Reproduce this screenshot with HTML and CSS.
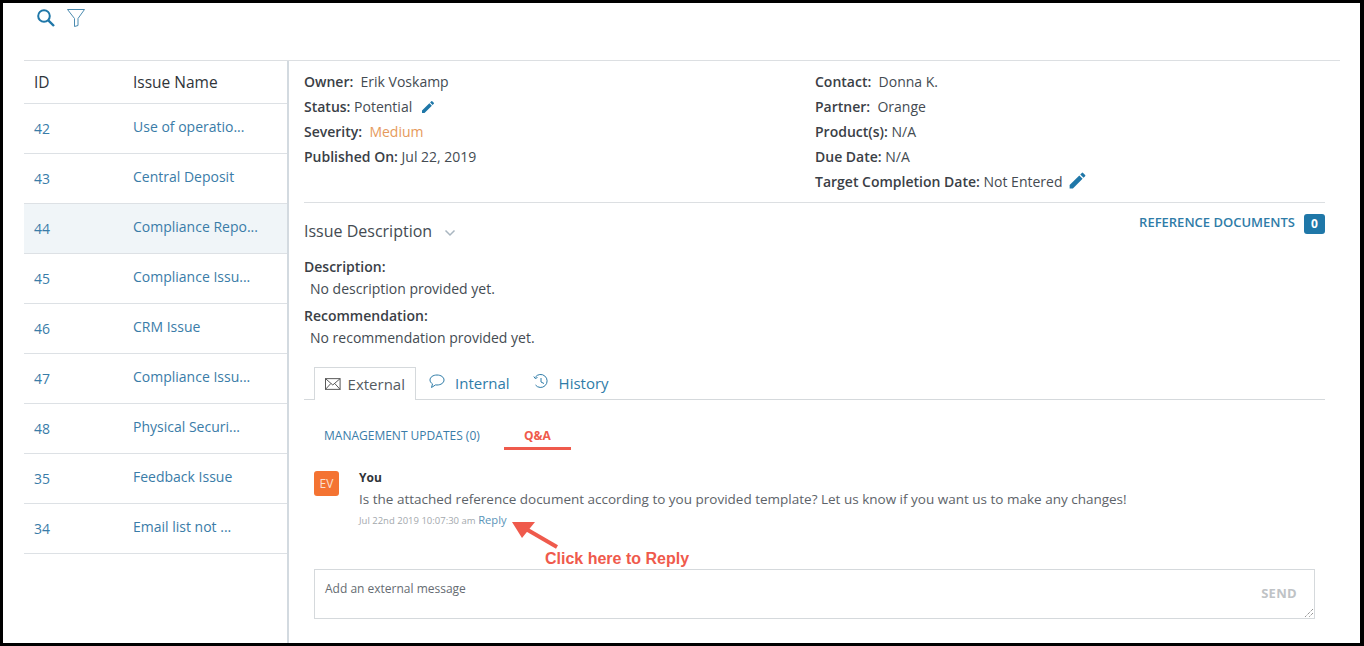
FILE: index.html
```html
<!DOCTYPE html>
<html lang="en">
<head>
<meta charset="utf-8">
<title>Issues</title>
<link rel="stylesheet" href="styles.css">
</head>
<body>
<div class="frame">
  <div class="toolbar">
    <svg class="ico-search" width="20" height="20" viewBox="0 0 20 20"><circle cx="8" cy="8" r="5.8" fill="none" stroke="#1f77a8" stroke-width="2"/><path d="M12.3 12.3L18 18" stroke="#1f77a8" stroke-width="2.4" fill="none"/></svg>
    <svg class="ico-filter" width="20" height="20" viewBox="0 0 20 20"><path d="M1.5 1.5H18.500L12 10.500V17.500L8.500 18.500V10.500Z" fill="none" stroke="#4a8bb0" stroke-width="1"/></svg>
  </div>
  <div class="main">
    <aside class="list">
      <div class="row head"><span class="c-id">ID</span><span class="c-name">Issue Name</span></div>
      <div class="row"><span class="c-id link">42</span><span class="c-name link">Use of operatio...</span></div>
      <div class="row"><span class="c-id link">43</span><span class="c-name link">Central Deposit</span></div>
      <div class="row active"><span class="c-id link">44</span><span class="c-name link">Compliance Repo...</span></div>
      <div class="row"><span class="c-id link">45</span><span class="c-name link">Compliance Issu...</span></div>
      <div class="row"><span class="c-id link">46</span><span class="c-name link">CRM Issue</span></div>
      <div class="row"><span class="c-id link">47</span><span class="c-name link">Compliance Issu...</span></div>
      <div class="row"><span class="c-id link">48</span><span class="c-name link">Physical Securi...</span></div>
      <div class="row"><span class="c-id link">35</span><span class="c-name link">Feedback Issue</span></div>
      <div class="row"><span class="c-id link">34</span><span class="c-name link">Email list not ...</span></div>
    </aside>
    <section class="detail">
      <div class="meta">
        <div class="meta-col left">
          <p><b>Owner:</b>&nbsp; Erik Voskamp</p>
          <p><b>Status:</b> Potential <svg class="pencil" width="16" height="16" viewBox="0 0 24 24"><path d="M3 17.25V21h3.75L17.81 9.940l-3.750-3.750L3 17.250zM20.710 7.040a1 1 0 0 0 0-1.410l-2.340-2.340a1 1 0 0 0-1.410 0l-1.830 1.830 3.750 3.750 1.830-1.830z" fill="#1f77a8"/></svg></p>
          <p><b>Severity:</b>&nbsp; <span class="medium">Medium</span></p>
          <p><b>Published On:</b> Jul 22, 2019</p>
        </div>
        <div class="meta-col right">
          <p><b>Contact:</b>&nbsp; Donna K.</p>
          <p><b>Partner:</b>&nbsp; Orange</p>
          <p><b>Product(s):</b> N/A</p>
          <p><b>Due Date:</b> N/A</p>
          <p><b>Target Completion Date:</b> Not Entered <svg class="pencil big" width="21" height="21" viewBox="0 0 24 24"><path d="M3 17.25V21h3.75L17.81 9.940l-3.750-3.750L3 17.250zM20.710 7.040a1 1 0 0 0 0-1.410l-2.340-2.340a1 1 0 0 0-1.410 0l-1.830 1.830 3.750 3.750 1.830-1.830z" fill="#1f77a8"/></svg></p>
        </div>
      </div>
      <div class="desc-head">
        <div class="desc-title">Issue Description <svg class="chev" width="12" height="8" viewBox="0 0 12 8"><path d="M1.500 1.500L6 6l4.500-4.500" fill="none" stroke="#a9b6c0" stroke-width="1.500"/></svg></div>
        <div class="refdocs"><span class="ref-label">REFERENCE DOCUMENTS</span><span class="badge">0</span></div>
      </div>
      <div class="desc">
        <p class="lbl">Description:</p>
        <p class="val">No description provided yet.</p>
        <p class="lbl second">Recommendation:</p>
        <p class="val">No recommendation provided yet.</p>
      </div>
      <div class="tabs">
        <div class="tab current">
          <svg width="16" height="12" viewBox="0 0 16 12"><rect x=".5" y=".5" width="15" height="11" fill="none" stroke="#555" stroke-width="1"/><path d="M.5.5L8 7l7.500-6.500M.5 11.500L6 5.500M15.500 11.500L10 5.500" fill="none" stroke="#555" stroke-width="1"/></svg>
          External
        </div>
        <div class="tab">
          <svg class="tab-ico" width="16" height="15" viewBox="0 0 16 15"><path d="M8 1C4 1 1 3.200 1 6c0 1.600 1 3 2.500 3.900L2.500 13.500 6.500 10.900c.5.100 1 .1 1.500.1 4 0 7-2.200 7-5S12 1 8 1z" fill="none" stroke="#2f7ca8" stroke-width="1"/></svg>
          Internal
        </div>
        <div class="tab">
          <svg class="tab-ico" width="16" height="15" viewBox="0 0 16 15"><path d="M2.300 3.200A6.500 6.500 0 1 1 2.500 11M.8 2.500L2.200 4.500 4.500 3.500M8 4v4l3 1.500" fill="none" stroke="#2f7ca8" stroke-width="1"/></svg>
          History
        </div>
      </div>
      <div class="subtabs">
        <span class="sub">MANAGEMENT UPDATES (0)</span>
        <span class="sub on">Q&amp;A</span>
      </div>
      <div class="msg">
        <div class="avatar">EV</div>
        <div class="msg-body">
          <div class="who">You</div>
          <div class="text">Is the attached reference document according to you provided template? Let us know if you want us to make any changes!</div>
          <div class="when"><span class="stamp">Jul 22nd 2019 10:07:30 am</span> <span class="reply">Reply</span></div>
        </div>
      </div>
      <div class="composer">
        <span class="placeholder">Add an external message</span>
        <span class="send">SEND</span>
        <svg class="grip" width="10" height="10" viewBox="0 0 10 10"><path d="M9 1L1 9M9 5L5 9" stroke="#666" stroke-width="1" stroke-dasharray="1 1" fill="none"/></svg>
      </div>
    </section>
  </div>
  <svg class="arrow" width="50" height="32" viewBox="0 0 50 32"><path d="M46 27L15 9" stroke="#ef5a4c" stroke-width="4" fill="none"/><path d="M1 2L24 2L11 18Z" fill="#ef5a4c"/></svg>
  <div class="note">Click here to Reply</div>
</div>
</body>
</html>
```
FILE: styles.css
```css
* { box-sizing: border-box; }
html, body { margin: 0; padding: 0; }
body { width: 1364px; height: 646px; overflow: hidden; background: #000; font-family: "Open Sans", sans-serif; font-size: 14px; color: #444b52; }
p { margin: 0; }
.frame { position: relative; margin: 3px 4px 3px 3px; width: 1357px; height: 640px; background: #fff; overflow: hidden; padding: 0 21px; }
.toolbar { height: 57px; display: flex; align-items: flex-start; gap: 10px; padding: 5px 0 0 12px; }
.main { display: flex; border-top: 1px solid #dcdfe2; width: 1316px; height: 583px; }
.list { width: 265px; flex: none; border-right: 2px solid #d3dae0; }
.row { height: 50px; display: flex; border-bottom: 1px solid #dde1e5; padding-left: 10px; }
.row.head { height: 43px; color: #2f3439; font-size: 15.5px; font-weight: 500; align-items: center; }
.row.head .c-id, .row.head .c-name { padding: 0; }
.row.active { background: #f0f5f8; }
.c-id { width: 99px; flex: none; padding-top: 15px; }
.c-name { padding-top: 13px; }
.link { color: #3a7ca8; }
.detail { flex: 1; padding-left: 15px; padding-right: 15px; min-width: 0; }
.meta { display: flex; height: 142px; border-bottom: 1px solid #dcdfe2; padding-top: 8px; line-height: 25px; }
.meta-col.left { width: 511px; flex: none; }
.meta b { font-weight: 600; color: #3a4046; }
.pencil { vertical-align: -3px; margin-left: 4px; }
.pencil.big { margin-left: 1px; vertical-align: -4px; }
.medium { color: #e69a5c; }
.desc-head { display: flex; justify-content: space-between; height: 52px; }
.desc-title { font-size: 16px; padding-top: 17px; line-height: 22px; }
.chev { margin-left: 8px; vertical-align: 0; }
.refdocs { display: flex; align-items: center; gap: 9px; height: 20px; margin-top: 11px; font-size: 13px; font-weight: 600; color: #2f7ca8; }
.ref-label { padding-bottom: 4px; }
.badge { width: 21px; height: 20px; border-radius: 3px; background: #1f77a8; color: #fff; font-size: 12px; text-align: center; line-height: 20px; font-weight: 700; }
.desc { line-height: 24px; height: 112px; }
.lbl { font-weight: 600; color: #3a4046; height: 24px; margin-top: 0; }
.lbl.second { margin-top: 1px; }
.val { padding-left: 6px; height: 24px; line-height: 20px; }
.tabs { display: flex; border-bottom: 1px solid #d5d9dc; height: 33px; padding-left: 10px; font-size: 15px; }
.tab { display: flex; align-items: center; gap: 10px; padding: 0 10px 0 13px; color: #2f7ca8; height: 32px; }
.tab-ico { margin-bottom: 3px; }
.tab.current { height: 33px; width: 102px; padding-left: 10px; padding-top: 0; gap: 7px; color: #555b61; border: 1px solid #d5d9dc; border-bottom: 0; background: #fff; }
.subtabs { display: flex; height: 50px; padding: 27px 0 0 20px; font-size: 12px; gap: 24px; }
.sub { color: #3a7ca8; height: 23px; line-height: 17px; }
.sub.on { width: 67px; text-align: center; color: #ef5a4c; font-weight: 700; border-bottom: 3px solid #ef5a4c; }
.msg { display: flex; padding: 21px 0 0 10px; height: 119px; }
.avatar { width: 25px; height: 25px; flex: none; background: #f47332; border-radius: 3px; color: #fbe0d0; font-size: 12px; text-align: center; line-height: 25px; }
.msg-body { margin-left: 20px; }
.who { font-size: 12px; font-weight: 700; color: #2f3439; line-height: 14px; }
.text { font-size: 13.5px; line-height: 20px; margin-top: 4px; color: #5d6369; }
.when { line-height: 16px; margin-top: 2px; }
.stamp { font-size: 9.5px; color: #a3a8ad; margin-right: -1px; }
.reply { font-size: 11.2px; color: #5a94b8; }
.composer { position: relative; margin: 0 10px 0 10px; height: 50px; border: 1px solid #d5d9dc; }
.placeholder { position: absolute; left: 10px; top: 10px; font-size: 12px; line-height: 18px; color: #666c72; }
.send { position: absolute; right: 17px; top: 14px; font-size: 13px; font-weight: 700; color: #bfc3c6; line-height: 18px; letter-spacing: .3px; }
.grip { position: absolute; right: 0; bottom: 0; }
.arrow { position: absolute; left: 508px; top: 517px; }
.note { position: absolute; left: 542px; top: 546px; font-family: "Liberation Sans", Arial, sans-serif; font-weight: 700; font-size: 16px; line-height: 19px; color: #ef5a4c; }
```
